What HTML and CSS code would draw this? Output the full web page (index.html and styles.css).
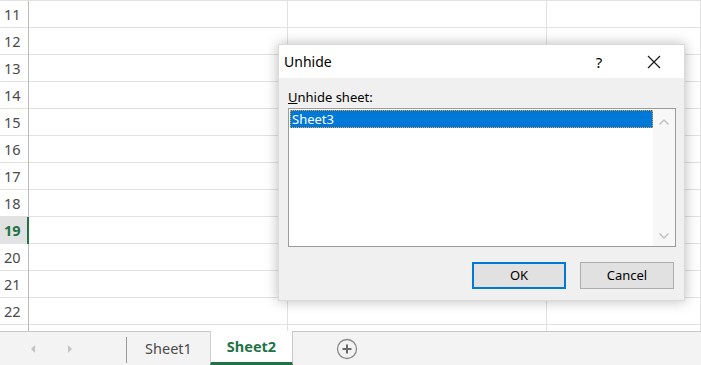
FILE: index.html
```html
<!DOCTYPE html>
<html lang="en">
<head>
    <meta charset="UTF-8">
    <title>Unhide</title>
    <link rel="stylesheet" href="styles.css">
</head>
<body>
    <div class="sheet">
        <div class="grid">
            <div class="row"><div class="head">11</div><div class="cell"></div><div class="cell"></div><div class="cell"></div></div>
            <div class="row"><div class="head">12</div><div class="cell"></div><div class="cell"></div><div class="cell"></div></div>
            <div class="row"><div class="head">13</div><div class="cell"></div><div class="cell"></div><div class="cell"></div></div>
            <div class="row"><div class="head">14</div><div class="cell"></div><div class="cell"></div><div class="cell"></div></div>
            <div class="row"><div class="head">15</div><div class="cell"></div><div class="cell"></div><div class="cell"></div></div>
            <div class="row"><div class="head">16</div><div class="cell"></div><div class="cell"></div><div class="cell"></div></div>
            <div class="row"><div class="head">17</div><div class="cell"></div><div class="cell"></div><div class="cell"></div></div>
            <div class="row"><div class="head">18</div><div class="cell"></div><div class="cell"></div><div class="cell"></div></div>
            <div class="row current"><div class="head">19</div><div class="cell"></div><div class="cell"></div><div class="cell"></div></div>
            <div class="row"><div class="head">20</div><div class="cell"></div><div class="cell"></div><div class="cell"></div></div>
            <div class="row"><div class="head">21</div><div class="cell"></div><div class="cell"></div><div class="cell"></div></div>
            <div class="row"><div class="head">22</div><div class="cell"></div><div class="cell"></div><div class="cell"></div></div>
            <div class="row"><div class="head"></div><div class="cell"></div><div class="cell"></div><div class="cell"></div></div>
        </div>

        <div class="tabbar">
            <div class="tab-nav">
                <svg width="8" height="10" viewBox="0 0 8 10"><path d="M6 1 L2 5 L6 9 Z" fill="#c4c4c4"/></svg>
                <svg width="8" height="10" viewBox="0 0 8 10"><path d="M2 1 L6 5 L2 9 Z" fill="#c4c4c4"/></svg>
            </div>
            <div class="tab-sep"></div>
            <div class="tab">Sheet1</div>
            <div class="tab active">Sheet2</div>
            <div class="tab-add">
                <svg width="22" height="22" viewBox="0 0 22 22">
                    <circle cx="11" cy="11" r="9.5" fill="none" stroke="#8a8a8a" stroke-width="1.3"/>
                    <path d="M11 6.5 V15.5 M6.5 11 H15.5" stroke="#6a6a6a" stroke-width="2"/>
                </svg>
            </div>
        </div>
    </div>

    <div class="dialog">
        <div class="dialog-title">
            <span class="dialog-caption">Unhide</span>
            <span class="dialog-help">?</span>
            <span class="dialog-close">
                <svg width="14" height="14" viewBox="0 0 14 14"><path d="M1 1 L13 13 M13 1 L1 13" stroke="#1a1a1a" stroke-width="1.2"/></svg>
            </span>
        </div>
        <div class="dialog-body">
            <div class="field-label"><u>U</u>nhide sheet:</div>
            <div class="listbox">
                <div class="list-items">
                    <div class="list-item selected">Sheet3</div>
                </div>
                <div class="list-scroll">
                    <svg width="12" height="8" viewBox="0 0 12 8"><path d="M1.5 6.5 L6 2 L10.5 6.5" fill="none" stroke="#c2c2c2" stroke-width="1.5"/></svg>
                    <svg width="12" height="8" viewBox="0 0 12 8"><path d="M1.5 1.5 L6 6 L10.5 1.5" fill="none" stroke="#c2c2c2" stroke-width="1.5"/></svg>
                </div>
            </div>
            <div class="dialog-buttons">
                <div class="btn default">OK</div>
                <div class="btn">Cancel</div>
            </div>
        </div>
    </div>
</body>
</html>
```

FILE: styles.css
```css
html,
body {
    margin: 0;
    width: 701px;
    height: 365px;
    overflow: hidden;
    background: #fff;
    font-family: "Noto Sans", "Open Sans", sans-serif;
}

.sheet {
    display: flex;
    flex-direction: column;
    height: 365px;
}

/* grid */
.grid {
    height: 332px;
    overflow: hidden;
    border-top: 1px solid #e1e1e1;
    box-sizing: border-box;
}

.row {
    display: grid;
    grid-template-columns: 29px 259px 259px 1fr;
    height: 27px;
    box-sizing: border-box;
    border-bottom: 1px solid #e1e1e1;
}

.head {
    border-right: 1px solid #bdbdbd;
    color: #4a4a4a;
    font-size: 14.5px;
    line-height: 27px;
    padding-left: 4px;
    margin-bottom: -1px;
}

.cell {
    border-right: 1px solid #e1e1e1;
    margin-bottom: -1px;
}

.row.current .head {
    background-color: #e2e2e2;
    color: #217346;
    font-weight: bold;
    border-right: 2px solid #217346;
}

/* sheet tabs */
.tabbar {
    flex: 1;
    display: flex;
    align-items: stretch;
    background-color: #f3f3f3;
    border-top: 1px solid #c8c8c8;
    margin-top: -1px;
}

.tab-nav {
    width: 126px;
    display: flex;
    align-items: center;
    gap: 29px;
    padding-left: 29px;
    box-sizing: border-box;
}

.tab-sep {
    width: 1px;
    background-color: #9a9a9a;
    margin: 5px 0 2px;
}

.tab {
    width: 83px;
    text-align: center;
    font-size: 14.5px;
    line-height: 32px;
    color: #4a4a4a;
}

.tab.active {
    background-color: #fff;
    color: #217346;
    font-weight: bold;
    border-left: 1px solid #d0d0d0;
    border-right: 1px solid #c8c8c8;
    border-bottom: 3px solid #217346;
    box-sizing: border-box;
    line-height: 30px;
    margin-top: -1px;
    height: 34px;
}

.tab-add {
    display: flex;
    align-items: center;
    padding-left: 43px;
}

/* dialog */
.dialog {
    position: absolute;
    left: 278px;
    top: 44px;
    width: 407px;
    height: 257px;
    background-color: #f0f0f0;
    border: 1px solid #dadada;
    box-sizing: border-box;
    box-shadow: 0 0 12px rgba(0, 0, 0, 0.28);
    font-size: 13px;
    color: #000;
    display: flex;
    flex-direction: column;
}

.dialog-title {
    height: 33px;
    background-color: #fff;
    display: flex;
    align-items: center;
    padding-left: 5px;
    font-size: 14px;
}

.dialog-caption {
    flex: 1;
}

.dialog-help {
    width: 20px;
    text-align: center;
    margin-right: 38px;
    font-size: 15px;
}

.dialog-close {
    width: 14px;
    height: 14px;
    margin-right: 23px;
    display: flex;
}

.dialog-body {
    flex: 1;
    padding: 9px 8px 0 9px;
}

.field-label {
    line-height: 20px;
    margin-bottom: 1px;
}

.field-label u {
    text-decoration-thickness: 1px;
}

.listbox {
    height: 139px;
    border: 1px solid #9b9b9b;
    background-color: #fff;
    display: flex;
    box-sizing: border-box;
}

.list-items {
    flex: 1;
    padding: 1px 0 0 1px;
}

.list-item {
    height: 18px;
    line-height: 18px;
    padding-left: 2px;
}

.list-item.selected {
    background-color: #0078d7;
    color: #fff;
    outline: 1px dotted #f2a23c;
    outline-offset: -1px;
}

.list-scroll {
    width: 22px;
    background-color: #f7f7f7;
    display: flex;
    flex-direction: column;
    justify-content: space-between;
    align-items: center;
    padding: 9px 0 6px;
}

.dialog-buttons {
    display: flex;
    justify-content: flex-end;
    gap: 14px;
    margin-top: 15px;
    padding-right: 2px;
}

.btn {
    width: 94px;
    height: 27px;
    line-height: 25px;
    text-align: center;
    background-color: #e1e1e1;
    border: 1px solid #adadad;
    box-sizing: border-box;
}

.btn.default {
    border: 2px solid #0078d7;
    line-height: 23px;
}
```
